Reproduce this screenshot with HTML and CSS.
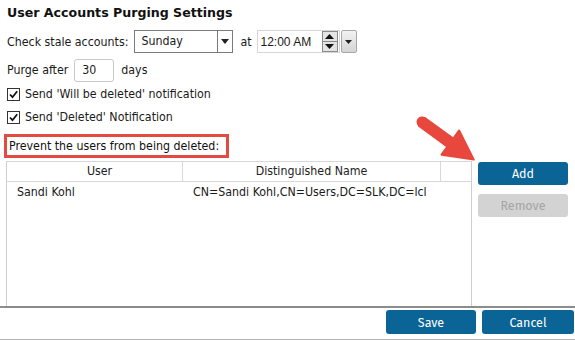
FILE: index.html
```html
<!DOCTYPE html>
<html>
<head>
<meta charset="utf-8">
<link rel="stylesheet" href="styles.css">
</head>
<body>
<div class="page">
  <div class="title">User Accounts Purging Settings</div>
  <div class="row r1">
    <span class="lbl">Check stale accounts:</span>
    <div class="select">
      <span class="sel-text">Sunday</span>
      <span class="sel-btn"><svg width="8" height="5" viewBox="0 0 8 5"><path d="M0 0H8L4 5Z" fill="#222"/></svg></span>
    </div>
    <span class="at">at</span>
    <div class="time">
      <span class="time-text">12:00 AM</span>
      <span class="spin">
        <span class="spin-half"><svg width="9" height="5" viewBox="0 0 9 5"><path d="M0 5L4.5 0L9 5Z" fill="#111"/></svg></span>
        <span class="spin-half"><svg width="9" height="5" viewBox="0 0 9 5"><path d="M0 0H9L4.5 5Z" fill="#111"/></svg></span>
      </span>
    </div>
    <span class="drop"><svg width="7" height="4" viewBox="0 0 7 4"><path d="M0 0H7L3.5 4Z" fill="#222"/></svg></span>
  </div>
  <div class="row r2">
    <span class="lbl">Purge after</span>
    <span class="num">30</span>
    <span class="lbl days">days</span>
  </div>
  <div class="row chk">
    <span class="box"><svg width="11" height="11" viewBox="0 0 11 11"><path d="M2 5.5L4.5 8.2L9.2 2.2" fill="none" stroke="#111" stroke-width="1.8"/></svg></span>
    <span>Send 'Will be deleted' notification</span>
  </div>
  <div class="row chk">
    <span class="box"><svg width="11" height="11" viewBox="0 0 11 11"><path d="M2 5.5L4.5 8.2L9.2 2.2" fill="none" stroke="#111" stroke-width="1.8"/></svg></span>
    <span>Send 'Deleted' Notification</span>
  </div>
  <div class="prevent">Prevent the users from being deleted:</div>
  <div class="main">
    <div class="grid">
      <div class="ghead">
        <div class="c1">User</div>
        <div class="c2">Distinguished Name</div>
        <div class="c3"></div>
      </div>
      <div class="grow">
        <div class="c1">Sandi Kohl</div>
        <div class="c2">CN=Sandi Kohl,CN=Users,DC=SLK,DC=lcl</div>
      </div>
    </div>
    <div class="side">
      <button class="btn primary">Add</button>
      <button class="btn disabled">Remove</button>
    </div>
  </div>
  <div class="footer">
    <button class="btn primary save">Save</button>
    <button class="btn primary cancel">Cancel</button>
  </div>
  <svg class="arrow" width="80" height="70" viewBox="0 0 80 70">
    <g transform="translate(8,10) rotate(36)">
      <path d="M0,-5 L35,-5 L35,-15 L64,0 L35,15 L35,5 L0,5 Z" fill="#e8473d" stroke="#e8473d" stroke-width="2" stroke-linejoin="round"/>
      <circle cx="0" cy="0" r="5.5" fill="#e8473d"/>
    </g>
  </svg>
</div>
</body>
</html>
```

FILE: styles.css
```css
* { box-sizing: border-box; }
html, body { margin: 0; padding: 0; background: #fff; }
body {
  width: 575px;
  height: 340px;
  overflow: hidden;
  font-family: "DejaVu Sans Condensed", "DejaVu Sans", sans-serif;
  font-size: 12.3px;
  color: #1a1a1a;
}
.page {
  position: relative;
  height: 340px;
  display: flex;
  flex-direction: column;
}
.title {
  font-family: "DejaVu Sans", sans-serif;
  font-weight: bold;
  font-size: 12.6px;
  padding: 4px 0 0 7px;
  height: 30px;
  line-height: 18px;
  color: #111;
}
.row {
  display: flex;
  align-items: center;
  padding-left: 7px;
}
.r1 { height: 24px; }
.lbl { white-space: nowrap; }
.select {
  margin-left: 6px;
  width: 99px;
  height: 23px;
  border: 1px solid #7a7a7a;
  display: flex;
}
.sel-text { flex: 1; padding-left: 6px; line-height: 21px; }
.sel-btn {
  width: 15px;
  border-left: 1px solid #7a7a7a;
  display: flex;
  align-items: center;
  justify-content: center;
}
.at { margin: 0 5px 0 7px; }
.time {
  width: 83px;
  height: 23px;
  border: 1px solid #d6d6d6;
  display: flex;
  align-items: center;
  font-family: "Liberation Sans", sans-serif;
  font-size: 12px;
}
.time-text { flex: 1; padding-left: 3px; }
.spin {
  width: 16px;
  height: 21px;
  display: flex;
  flex-direction: column;
  border: 1px solid #8a8a8a;
  background: #e4e4e4;
  margin-right: 1px;
}
.spin-half {
  flex: 1;
  display: flex;
  align-items: center;
  justify-content: center;
}
.spin-half + .spin-half { border-top: 1px solid #8a8a8a; }
.drop {
  width: 16px;
  height: 23px;
  margin-left: 1px;
  border: 1px solid #a8a8a8;
  border-radius: 2px;
  background: linear-gradient(#f2f2f2, #d4d4d4);
  display: flex;
  align-items: center;
  justify-content: center;
}
.r2 { height: 23px; margin-top: 5px; }
.num {
  margin-left: 6px;
  width: 40px;
  height: 23px;
  border: 1px solid #c8c8c8;
  border-radius: 3px;
  padding-left: 7px;
  line-height: 21px;
}
.days { margin-left: 7px; }
.chk { height: 23px; }
.r2 + .chk { margin-top: 1px; }
.box {
  width: 13px;
  height: 13px;
  border: 1px solid #333;
  margin-right: 5px;
  display: flex;
  align-items: center;
  justify-content: center;
  background: #fff;
}
.prevent {
  margin: 5px 0 0 4px;
  width: 225px;
  height: 24px;
  border: 3px solid #e34a42;
  padding-left: 2px;
  line-height: 18px;
  color: #111;
}
.main {
  display: flex;
  margin-top: 3px;
  height: 146px;
}
.grid {
  margin-left: 6px;
  width: 466px;
  border-left: 1px solid #cfcfcf;
  border-right: 1px solid #cfcfcf;
  border-top: 1px solid #d8d8d8;
}
.ghead {
  display: flex;
  height: 20px;
  border-bottom: 1px solid #d8d8d8;
  line-height: 19px;
  color: #222;
}
.ghead > div { text-align: center; }
.c1 { width: 176px; }
.c2 { width: 258px; }
.c3 { width: 30px; }
.ghead .c1, .ghead .c2 { border-right: 1px solid #d8d8d8; }
.ghead .c1 { padding-left: 10px; }
.grow {
  display: flex;
  height: 22px;
  line-height: 20px;
}
.grow .c1 { padding-left: 10px; }
.grow .c2 { padding-left: 10px; white-space: nowrap; }
.side {
  margin-left: 6px;
  padding-top: 1px;
  display: flex;
  flex-direction: column;
  gap: 9px;
}
.btn {
  width: 90px;
  height: 23px;
  border: none;
  border-radius: 3px;
  font-family: "Fira Sans", "Open Sans", sans-serif;
  font-size: 12.5px;
  padding: 0;
}
.primary { background: #0b6496; color: #fff; }
.disabled { background: #d3d3d3; color: #a4a4a4; }
.footer {
  border-top: 2px solid #8c8c8c;
  border-bottom: 1px solid #b4b4b4;
  height: 34px;
  display: flex;
  justify-content: flex-end;
  align-items: flex-start;
  padding-top: 2px;
  gap: 6px;
  padding-right: 1px;
}
.save { width: 90px; height: 24px; }
.cancel { width: 92px; height: 24px; }
.arrow {
  position: absolute;
  left: 414px;
  top: 112px;
}
```
